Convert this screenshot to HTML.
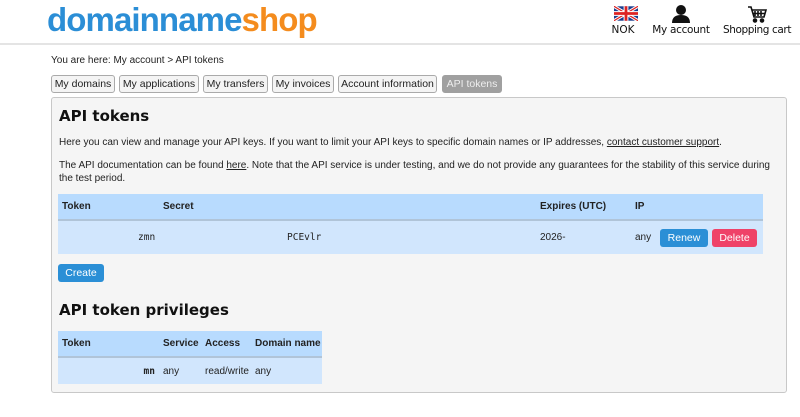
<!DOCTYPE html>
<html><head><style>
*{box-sizing:border-box;margin:0;padding:0}
body{width:800px;height:417px;background:#fff;font-family:"Liberation Sans",Arial,sans-serif;font-size:10px;color:#222;position:relative;overflow:hidden}
.abs{position:absolute}
.logo{left:47px;top:1px;font-size:33px;font-weight:bold;letter-spacing:-0.9px;color:#2b8ed6;white-space:nowrap}
.logo b{color:#f48c1e}
.hdr{top:43px;left:0;width:800px;height:2px;background:#e4e4e4}
.top{font-family:"DejaVu Sans",sans-serif;font-size:10.5px;color:#111;text-align:center;white-space:nowrap}
.tab{position:absolute;top:75px;height:18px;border:1px solid #aaa;border-radius:3px;background:#f4f4f4;font-size:10.5px;line-height:16px;text-align:center;color:#222;white-space:nowrap}
.panel{left:51px;top:97px;width:736px;height:296px;border:1px solid #c8c8c8;border-radius:3px;background:#f5f5f5}
h1,h2{position:absolute;font-family:"DejaVu Sans",sans-serif;font-weight:bold;font-size:15px;color:#111}
table{position:absolute;border-collapse:collapse;font-size:10px}
th{background:#b8dbfe;font-weight:bold;text-align:left;height:26px;border-bottom:2px solid #b0c4d8;padding-left:4px;white-space:nowrap}
td{background:#d1e6fd;padding-left:4px;white-space:nowrap}
.btn{position:absolute;color:#fff;border-radius:3px;font-size:10.5px;text-align:center;line-height:18px;height:18px}
.mono{font-family:"DejaVu Sans Mono",monospace;font-size:9.5px}
</style></head><body>
<div class="abs logo">domainname<b>shop</b></div>
<div class="abs hdr"></div>
<svg class="abs" style="left:614px;top:6px" width="24" height="15" viewBox="0 0 60 36"><rect width="60" height="36" fill="#1a3d8f"/><path d="M0 0L60 36M60 0L0 36" stroke="#fff" stroke-width="8"/><path d="M0 0L60 36M60 0L0 36" stroke="#d22" stroke-width="3"/><path d="M30 0V36M0 18H60" stroke="#fff" stroke-width="12"/><path d="M30 0V36M0 18H60" stroke="#d22" stroke-width="7"/></svg>
<div class="abs top" style="left:605px;width:36px;top:24px">NOK</div>
<svg class="abs" style="left:671px;top:4px" width="20" height="19" viewBox="0 0 20 19"><circle cx="10" cy="6" r="5" fill="#111"/><path d="M1 19Q1 11 10 11Q19 11 19 19Z" fill="#111"/></svg>
<div class="abs top" style="left:646px;width:70px;top:24px;letter-spacing:-0.3px">My account</div>
<svg class="abs" style="left:747px;top:6px" width="20" height="17" viewBox="0 0 20 17" fill="none" stroke="#111" stroke-width="1.6"><path d="M1 1h3l3 10h10l2-7H5"/><path d="M8 5v5M11 5v5M14 5v5M6 7.5h12"/><circle cx="8" cy="14.5" r="1.5" fill="#111"/><circle cx="15" cy="14.5" r="1.5" fill="#111"/></svg>
<div class="abs top" style="left:720px;width:74px;top:24px;letter-spacing:-0.4px">Shopping cart</div>
<div class="abs" style="left:51px;top:55px">You are here: My account &gt; API tokens</div>
<div class="tab" style="left:51px;width:64px">My domains</div>
<div class="tab" style="left:119px;width:80px">My applications</div>
<div class="tab" style="left:203px;width:65px">My transfers</div>
<div class="tab" style="left:272px;width:62px">My invoices</div>
<div class="tab" style="left:338px;width:99px">Account information</div>
<div class="tab" style="left:442px;width:60px;background:#a0a0a0;border-color:#a0a0a0;color:#eee">API tokens</div>
<div class="abs panel"></div>
<h1 style="left:59px;top:107px">API tokens</h1>
<div class="abs" style="left:59px;top:137px;white-space:nowrap">Here you can view and manage your API keys. If you want to limit your API keys to specific domain names or IP addresses, <u>contact customer support</u>.</div>
<div class="abs" style="left:59px;top:159px;width:724px;line-height:13px">The API documentation can be found <u>here</u>. Note that the API service is under testing, and we do not provide any guarantees for the stability of this service during the test period.</div>
<table style="left:58px;top:194px;width:705px">
<tr><th style="width:101px">Token</th><th style="width:377px">Secret</th><th style="width:95px">Expires (UTC)</th><th>IP</th></tr>
<tr style="height:34px"><td class="mono" style="padding-left:80px">zmn</td><td class="mono" style="padding-left:128px">PCEvlr</td><td>2026-</td><td>any</td></tr>
</table>
<div class="btn" style="left:660px;top:229px;width:48px;background:#2b8fd6">Renew</div>
<div class="btn" style="left:712px;top:229px;width:45px;background:#ef4268">Delete</div>
<div class="btn" style="left:58px;top:264px;width:46px;background:#2b8fd6">Create</div>
<h2 style="left:59px;top:301px">API token privileges</h2>
<table style="left:58px;top:331px;width:264px">
<tr><th style="width:101px">Token</th><th style="width:42px">Service</th><th style="width:50px">Access</th><th>Domain name</th></tr>
<tr style="height:27px"><td class="mono" style="text-align:right;padding-right:4px;font-weight:bold">mn</td><td>any</td><td>read/write</td><td>any</td></tr>
</table>
</body></html>
